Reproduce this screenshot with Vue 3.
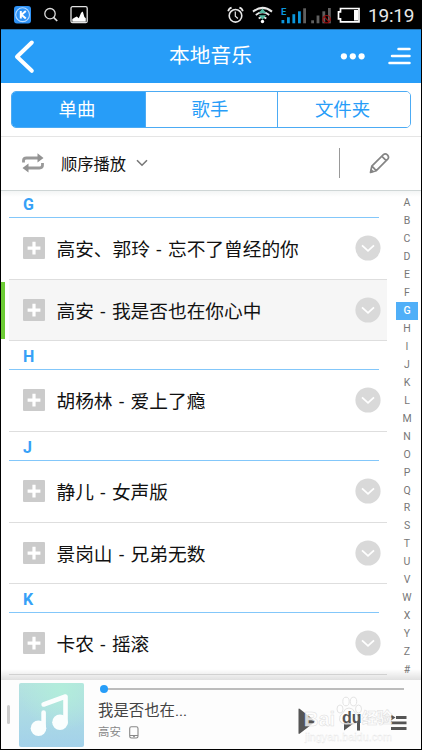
<script setup>
const tabs = ['单曲', '歌手', '文件夹']
const letters = 'ABCDEFGHIJKLMNOPQRSTUVWXYZ#'.split('')
const groups = [
  { key: 'G', songs: [{ name: '高安、郭玲 - 忘不了曾经的你' }, { name: '高安 - 我是否也在你心中', current: true, short: true }] },
  { key: 'H', songs: [{ name: '胡杨林 - 爱上了瘾' }] },
  { key: 'J', songs: [{ name: '静儿 - 女声版' }, { name: '景岗山 - 兄弟无数', short: true }] },
  { key: 'K', songs: [{ name: '卡农 - 摇滚' }] }
]
</script>

<template>
  <div class="screen">
    <header class="status">
      <svg class="status-left" width="90" height="29" viewBox="0 0 90 29">
        <rect x="14" y="6" width="17" height="17.500" rx="3" fill="#2f92f5" />
        <circle cx="22.600" cy="14.700" r="6.900" fill="none" stroke="#b9dcff" stroke-width="1.100" />
        <path d="M20.800 11v7.400M25.800 11l-4.300 3.700 4.300 3.700" fill="none" stroke="#fff" stroke-width="2" />
        <circle cx="50" cy="13.700" r="5.200" fill="none" stroke="#ddd" stroke-width="1.300" />
        <path d="M53.600 17.400l3.600 3.600" stroke="#ddd" stroke-width="1.700" />
        <rect x="71" y="6.700" width="16.200" height="16" rx="1.500" fill="none" stroke="#e2e2e2" stroke-width="1.300" />
        <path d="M72.300 21.800V19l2.500-1.500 2-1 2 1.800 2.300-5.500 1.700-1.300 1.600 5.500 1.400 1.200v3.600z" fill="#fff" />
      </svg>
      <svg class="status-right" width="142" height="29" viewBox="0 0 142 29">
        <g fill="none" stroke="#e8e8e8">
          <circle cx="14.500" cy="15.800" r="6.300" stroke-width="1.600" />
          <path d="M14.300 11.500v4.700l2.600 2.300" stroke-width="1.200" />
          <path d="M7.200 11.200q.600-2.800 3.400-3.600M21.800 11.200q-.600-2.800-3.400-3.600" stroke-width="1.700" />
          <path d="M32 11.600q9.500-7.400 19 0" stroke-width="2" />
          <path d="M34.800 15q6.700-5.400 13.400 0M37.700 18.500q3.800-3 7.600 0" stroke-width="1.800" />
        </g>
        <path d="M41.500 8.500l3.600 4.500h-7.200zM41.500 19.800l3.600-4.500h-7.200z" fill="#55b9a0" />
        <circle cx="41.500" cy="21.500" r="1.700" fill="#fff" />
        <text x="60" y="14.500" class="net">E</text>
        <g fill="#0b96db">
          <rect x="60.500" y="20" width="2.800" height="3.300" /><rect x="66" y="17.200" width="2.800" height="6.100" />
          <rect x="71.400" y="14.200" width="2.800" height="9.100" /><rect x="77" y="11.300" width="2.800" height="12" />
        </g>
        <g fill="#5f5f5f">
          <rect x="82.200" y="8.300" width="2.800" height="15" />
          <rect x="90.200" y="20.300" width="2.800" height="3" /><rect x="95.600" y="15.500" width="2.800" height="7.800" />
          <rect x="101.400" y="11.300" width="2.800" height="12" /><rect x="107" y="8" width="2.800" height="15.300" />
        </g>
        <g fill="none" stroke="#960b0b" stroke-width="1.200">
          <circle cx="105.600" cy="19.200" r="3.700" /><path d="M103 16.600l5.200 5.200" />
        </g>
        <path d="M119.500 8.500h18.500v13.300h-18.500v-3h-2v-7h2z" fill="none" stroke="#fff" stroke-width="1.700" />
        <rect x="133" y="10" width="4" height="10.500" fill="#fff" />
      </svg>
      <span class="clock">19:19</span>
    </header>

    <nav class="title-bar">
      <svg width="60" height="54" viewBox="0 0 60 54"><path d="M31.800 13.500L17 27.800l14.800 14" fill="none" stroke="#fff" stroke-width="4" stroke-linecap="round" stroke-linejoin="round" /></svg>
      <h1>本地音乐</h1>
      <svg width="82" height="54" viewBox="0 0 82 54" fill="#fff">
        <circle cx="4.900" cy="27.300" r="3.100" /><circle cx="13.800" cy="27.300" r="3.100" /><circle cx="22.600" cy="27.300" r="3.100" />
        <path d="M59.500 20h11M53 27h17.500M50.500 34h20" stroke="#fff" stroke-width="2.500" stroke-linecap="round" />
      </svg>
    </nav>

    <div class="tab-area">
      <div class="tabs">
        <button v-for="(tab, i) in tabs" :key="tab" :class="{ active: i === 0 }">{{ tab }}</button>
      </div>
    </div>

    <div class="toolbar">
      <svg class="repeat" width="24" height="22" viewBox="0 0 24 22">
        <g fill="none" stroke="#999" stroke-width="2.800"><path d="M2.500 10.500V8.500q0-2.500 3-2.500h12M21.500 11v2q0 3-3 3h-12" /></g>
        <path d="M16.500 1.200L22.500 6l-6 4.500zM7.500 11.500L1.500 16l6 4.500z" fill="#929292" />
      </svg>
      <span class="mode">顺序播放</span>
      <svg class="caret" width="12" height="8" viewBox="0 0 12 8"><path d="M1 1.200l5 5 5-5" fill="none" stroke="#777" stroke-width="1.600" /></svg>
      <span class="split"></span>
      <svg class="pencil" width="22" height="22" viewBox="0 0 22 22">
        <path d="M1.500 20.500l1.300-6.300L14.400 2.600q1.900-1.700 4 .2 2.100 2.200.300 4.300L7.300 18.700zM13 4.300l4.200 4.300M3 14.200l4.200 4.400" fill="none" stroke="#858585" stroke-width="1.700" stroke-linejoin="round" />
        <path d="M1 21l1-4.500 3.200 3.200z" fill="#858585" />
      </svg>
    </div>

    <main class="content">
      <div class="songs">
        <section v-for="group in groups" :key="group.key">
          <h2>{{ group.key }}</h2>
          <div v-for="song in group.songs" :key="song.name" class="song" :class="{ current: song.current, short: song.short }">
            <svg width="22" height="22" viewBox="0 0 22 22"><rect width="22" height="22" rx="1" fill="#cbcbcb" /><path d="M11 4.800v12.800M4.600 11.200h12.800" stroke="#fff" stroke-width="3.200" /></svg>
            <span class="name">{{ song.name }}</span>
            <svg width="26" height="26" viewBox="0 0 26 26"><circle cx="13" cy="13" r="12.600" fill="#d9d9d9" /><path d="M7 10.300l6 5.500 6-5.500" fill="none" stroke="#fff" stroke-width="1.800" /></svg>
          </div>
        </section>
      </div>
      <aside class="index">
        <span v-for="letter in letters" :key="letter" :class="{ selected: letter === 'G' }">{{ letter }}</span>
      </aside>
    </main>

    <footer class="player">
      <span class="handle"></span>
      <svg class="cover" width="65" height="64" viewBox="0 0 65 64">
        <defs>
          <linearGradient id="cover-base" x1="0" y1="0" x2="0" y2="1"><stop stop-color="#b4e3df" /><stop offset="1" stop-color="#a3d1ea" /></linearGradient>
          <radialGradient id="cover-glow" cx=".65" cy=".1" r=".65"><stop stop-color="#b2eddb" /><stop offset="1" stop-color="#b2eddb" stop-opacity="0" /></radialGradient>
        </defs>
        <rect width="65" height="64" rx="2" fill="url(#cover-base)" /><rect width="65" height="64" rx="2" fill="url(#cover-glow)" />
        <g fill="none" stroke="#fff" stroke-opacity=".95" stroke-width="4.600" stroke-linecap="round" stroke-linejoin="round"><path d="M24.600 29.500V46M24.600 21.500L46.500 13.500V40" /></g>
        <circle cx="19.500" cy="45.300" r="7.800" fill="#fafefe" /><circle cx="41" cy="39.300" r="7.800" fill="#fafefe" />
      </svg>
      <div class="now">
        <div class="progress"><i></i></div>
        <div class="details">
          <div class="track">
            <strong>我是否也在...</strong>
            <p>高安<svg width="10" height="13" viewBox="0 0 10 13"><rect x=".700" y=".700" width="8.300" height="11.300" rx="1.700" fill="none" stroke="#888" stroke-width="1.100" /><path d="M1 9.500h8" stroke="#888" /><path d="M4 10.700h2" stroke="#888" /></svg></p>
          </div>
          <svg class="controls" width="112" height="30" viewBox="0 0 112 30" fill="#555">
            <path d="M1.500 2.500q0-1.500 1.400-.500l14.600 11.600q.800.800 0 1.600L2.900 26.500q-1.400 1-1.400-.500z" />
            <path d="M47 16l10 0-10 7.500zM60 7.500h3v16h-3z" />
            <path d="M94 7.500l4.500 3-4.500 3zM99 9h10.500v3H99zM94 14.500h15.500v2.800H94zM94 20h15.500v3H94z" />
          </svg>
        </div>
      </div>
      <div class="watermark">
        <svg width="28" height="31" viewBox="0 0 28 31" fill="#fff" stroke="#dedede" stroke-width="1">
          <ellipse cx="5" cy="13" rx="3" ry="4" /><ellipse cx="11" cy="5.500" rx="3.200" ry="4.300" /><ellipse cx="18.500" cy="5.500" rx="3.200" ry="4.300" /><ellipse cx="23.500" cy="13" rx="3" ry="4" />
          <path d="M14 12q4 0 5.500 4 5 4 4 8-1.500 5-9.500 4-8 1-9.500-4-1-4 4-8Q10 12 14 12z" />
        </svg>
        <div class="brand"><b>Bai</b><em>du</em><b>经验</b></div>
        <small>jingyan.baidu.com</small>
      </div>
    </footer>
  </div>
</template>

<style>
body { margin: 0; background: #fff; }
</style>

<style scoped>
* { box-sizing: border-box; }
.screen { width: 422px; height: 750px; border: 1px solid #000; border-top: 0; background: #fff; overflow: hidden; font-family: Roboto, "Noto Sans CJK SC", sans-serif; color: #111; display: flex; flex-direction: column; }
svg { display: block; flex: none; }
h1, h2, p { margin: 0; font-weight: 400; }
.status { height: 29px; flex: none; display: flex; background: #000; margin-left: -1px; }
.status-right { margin-left: 131px; }
.net { font: 700 9.500px Roboto, sans-serif; fill: #0b96db; }
.clock { margin-left: 5px; color: #e8e8e8; font-size: 19px; line-height: 31px; letter-spacing: -.2px; }
.title-bar { height: 54px; flex: none; background: #279df8; border-top: 1px solid #2474b0; display: flex; justify-content: space-between; margin-left: -1px; padding-left: 1px; }
.title-bar svg { margin-top: -1px; }
.title-bar svg:first-child { margin-left: -1px; }
.title-bar h1 { color: #fff; font-size: 20.700px; line-height: 53px; margin-left: 25px; }
.title-bar h1 + svg { margin-left: 3px; }
.tab-area { height: 54px; flex: none; padding: 8px 10px 0; border-bottom: 1px solid #e5e5e5; }
.tabs { height: 37px; width: 400px; display: grid; grid-template-columns: 133px 132px 1fr; border: 1.500px solid #4cabf4; border-radius: 5px; overflow: hidden; }
.tabs button { border: 0; padding: 0 3px 0 0; background: #fff; color: #279df8; font: 18.400px/35px Roboto, "Noto Sans CJK SC", sans-serif; }
.tabs button + button { border-left: 1px solid #4cabf4; }
.tabs .active { background: #279df8; color: #fff; }
.toolbar { height: 54px; flex: none; display: flex; align-items: center; padding-left: 20px; border-bottom: 1px solid #cfd6d6; }
.repeat { margin-top: -2px; }
.mode { font-size: 16.300px; margin-left: 16px; margin-top: -1px; }
.caret { margin: -1px 0 0 9.500px; }
.split { width: 1px; height: 30px; background: #999; margin: -2px 0 0 191.500px; }
.pencil { margin: -2px 0 0 29px; }
.content { height: 489px; flex: none; display: flex; background: linear-gradient(#f3f5f5, #fff 6px); }
.songs { width: 386px; padding-left: 8px; }
h2 { width: 370px; height: 29px; padding: 1px 0 0 14px; color: #36a1f7; border-bottom: 1px solid #83c7fa; font-size: 16px; font-weight: 700; line-height: 29px; }
section:first-child h2 { height: 27px; line-height: 26px; }
.song { position: relative; height: 62px; display: flex; align-items: center; padding: 0 6px 1px 14px; border-bottom: 1px solid #dedede; }
.song.short { height: 61px; }
.song.current { background: #f6f6f6; }
.song.current::before { content: ""; position: absolute; left: -8px; top: 2px; width: 4px; height: 57px; background: #6dcc35; }
.name { flex: 1; margin-left: 11.500px; font-size: 18.700px; word-spacing: 1.800px; white-space: nowrap; padding-bottom: 1px; }
.index { width: 22px; margin-left: 9px; padding-top: 3px; color: #777; font-size: 10.500px; }
.index span { display: block; height: 17.980px; line-height: 18px; text-align: center; }
.index .selected { background: #50aff8; color: #fff; font-weight: 500; }
.player { position: relative; flex: 1; background: #fdfdfd; display: flex; padding-top: 3px; }
.player::before { content: ""; position: absolute; left: 0; right: 0; top: -11px; height: 11px; background: linear-gradient(rgba(0,0,0,0), rgba(0,0,0,.12)); }
.handle { width: 3px; height: 19px; border-radius: 2px; background: #ccc; margin: 22px 9px 0 6px; }
.now { width: 312px; margin-left: 14px; }
.progress { height: 2px; width: 300px; margin: 5px 0 0 6px; background: #bcbcbc; position: relative; }
.progress i { position: absolute; left: -4px; top: -3px; width: 8px; height: 8px; border-radius: 50%; background: #279df8; }
.details { display: flex; justify-content: space-between; }
.track strong { display: block; font-size: 15.400px; line-height: 22px; font-weight: 400; color: #444; margin-top: 10px; }
.track p { color: #888; font-size: 11.400px; line-height: 20px; display: flex; align-items: center; gap: 8px; }
.controls { margin: 17px 1px 0 0; }
.watermark { position: absolute; left: 304px; top: 16px; width: 91px; height: 44px; color: rgba(255,255,255,.8); }
.watermark svg { position: absolute; left: 30px; top: 0; opacity: .8; }
.brand { position: absolute; top: 12px; left: -1px; display: flex; font: 700 20px/22px "Liberation Sans", "Noto Sans CJK SC", sans-serif; white-space: nowrap; -webkit-text-stroke: .5px #ddd; }
.brand b:first-child { width: 34px; }
.brand em { width: 24px; font-style: normal; font-size: 16px; line-height: 19px; color: #555; -webkit-text-stroke: 0; padding-left: 4px; }
.brand b:last-child { font-size: 15px; line-height: 20px; }
.watermark small { position: absolute; left: 0; top: 35px; font: 10.800px/13px "Liberation Sans", sans-serif; -webkit-text-stroke: .3px #e4e4e4; }
</style>
